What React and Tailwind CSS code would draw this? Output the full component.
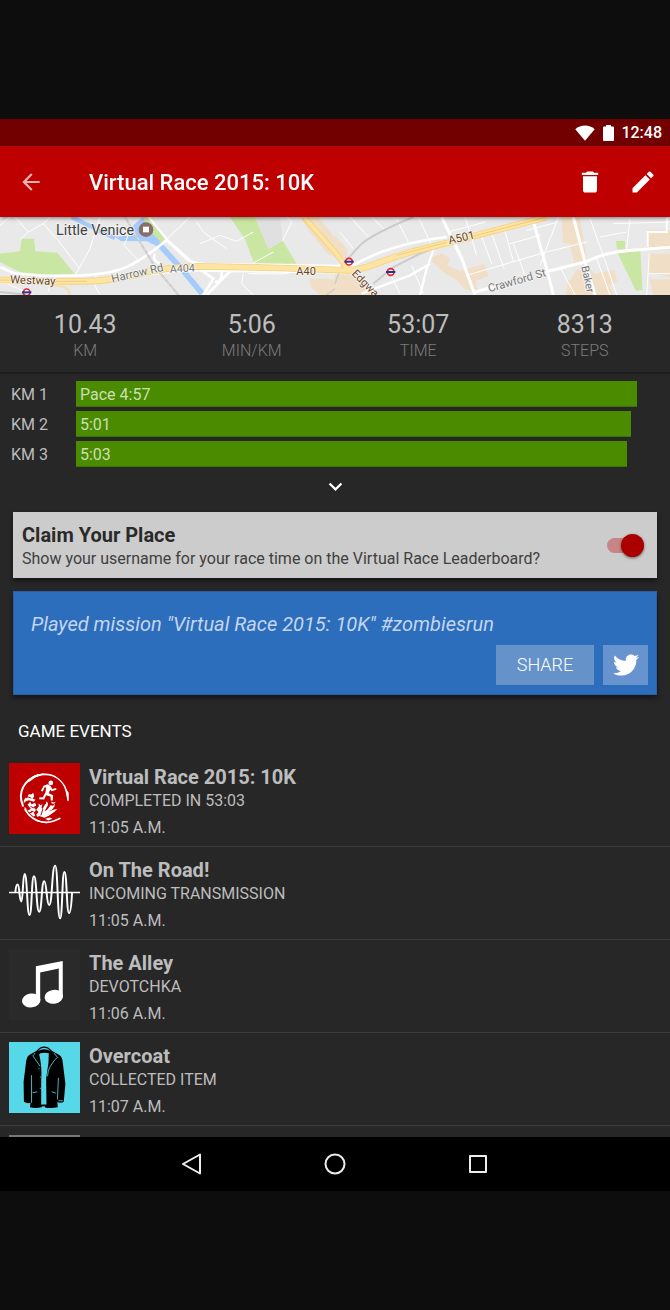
import React, { useState } from "react";
import { MdArrowBack, MdDelete, MdEdit, MdKeyboardArrowDown } from "react-icons/md";
import { FaTwitter } from "react-icons/fa";

const stats = [
  { value: "10.43", label: "KM" },
  { value: "5:06", label: "MIN/KM" },
  { value: "53:07", label: "TIME" },
  { value: "8313", label: "STEPS" },
];

const splits = [
  { km: "KM 1", text: "Pace 4:57", width: 96.6 },
  { km: "KM 2", text: "5:01", width: 95.6 },
  { km: "KM 3", text: "5:03", width: 94.8 },
];

function StatusBar() {
  return (
    <div className="flex h-[27px] shrink-0 items-center justify-end bg-[#720000] pr-2 text-white">
      <svg width="20" height="16" viewBox="0 0 20 16" fill="currentColor" aria-hidden="true">
        <path d="M10 15.8 0.3 4.2C3 1.8 6.3 0.6 10 0.6s7 1.2 9.7 3.6z" />
      </svg>
      <svg className="ml-2" width="11" height="16" viewBox="0 0 11 16" fill="currentColor" aria-hidden="true">
        <path d="M3 0h5v1.500h2q1 0 1 1V15q0 1-1 1H1q-1 0-1-1V2.500q0-1 1-1h2z" />
      </svg>
      <span className="ml-[7px] pt-px text-base font-medium">12:48</span>
    </div>
  );
}

function Toolbar() {
  return (
    <header className="relative z-10 flex h-[71px] shrink-0 items-center bg-[#be0000] px-[11px] text-white shadow-[0_1px_4px_rgba(0,0,0,0.5)]">
      <button type="button" aria-label="Back" className="flex size-10 items-center justify-center text-white/70">
        <MdArrowBack size={26} />
      </button>
      <h1 className="ml-[38px] flex-1 pt-0.5 text-[22px] font-medium">Virtual Race 2015: 10K</h1>
      <button type="button" aria-label="Delete" className="flex size-10 items-center justify-center">
        <MdDelete size={28} />
      </button>
      <button type="button" aria-label="Edit" className="-mr-1 ml-[13px] flex size-10 items-center justify-center">
        <MdEdit size={28} />
      </button>
    </header>
  );
}

function Station({ x, y }) {
  return (
    <g>
      <circle cx={x} cy={y} r="10" fill="#fff" stroke="#e32431" strokeWidth="5" />
      <path d={`M${x - 14} ${y}h28`} stroke="#27348b" strokeWidth="6" />
    </g>
  );
}

function RouteMap() {
  return (
    <svg
      className="block h-[78px] w-full bg-[#e9e9e9]"
      viewBox="0 15 2010 234"
      preserveAspectRatio="xMidYMid slice"
      role="img"
      aria-label="Route map"
      fontFamily="Roboto, sans-serif"
    >
      {/* parks */}
      <g fill="#c9e6a2">
        <path d="M0 125 60 118 65 80 102 80 106 118 172 122 226 188 70 185 0 150z" />
        <path d="M690 15H765L805 112 848 86 890 155 762 153 735 82z" />
        <path d="M440 15 498 82 482 96 445 58 428 15z" />
        <path d="M1848 87h27v25h-24zM1853 124 1921 117 1927 234 1908 236z" />
      </g>
      <path d="M765 15H840L848 86 805 112z" fill="#e0e0e0" />
      {/* built-up areas */}
      <g fill="#f0dfc6">
        <path d="M900 15H955L1005 78 1005 135 985 128 930 60z" />
        <path d="M930 200h75v50h-45l-28-26zM1005 70 1040 110 1048 150 1005 120zM1005 188h62l75 62H1005z" />
        <path d="M940 160h65v22h-50z" />
        <path d="M1287 140 1325 124 1350 140 1342 160 1380 178 1452 155 1466 192 1428 207 1432 240 1395 232 1365 200 1330 180z" />
        <path d="M1685 15h54l22 130-38 12-14-62-20-2zM1725 178l42-12 16 20 58-12 12 36-24 8 12 32-100 0 8-40-38-4z" />
        <path d="M1940 55h70v60h-70zM1945 125h65v70l-62-12zM1948 202h62v48h-50z" />
        <path d="M1705 205h44l8 44h-60z" />
      </g>
      {/* canal */}
      <g fill="none" stroke="#a5cbfb">
        <path d="M215 15 255 35 345 78" strokeWidth="13" />
        <path d="M482 102 540 165 606 244" strokeWidth="17" />
      </g>
      <path d="M428 15 398 42 400 70 345 74 362 87 440 88 474 104 488 96 448 55z" fill="#a5cbfb" />
      {/* side streets */}
      <g fill="none" stroke="#fff" strokeWidth="3">
        <path d="M0 40 30 15M45 15 85 60 130 35 150 15M300 15 270 110 238 168 170 80 130 35M238 168 226 188M290 185 282 215 300 249M85 60 62 82" />
        <path d="M395 45 372 100 420 150M570 15 500 82M600 95 660 70 710 88 760 60M590 30 610 60 680 110M848 86 875 30 860 15" />
        <path d="M730 185 725 215 760 249M745 185 840 186M840 186 930 175M760 153 820 120M20 215 100 249M150 218 145 240" />
        <path d="M1050 15 1105 75M1115 15 1155 55M1020 60 1060 110M1190 20 1225 90M1255 15 1300 110M1235 160 1270 245M1395 15 1430 130M1440 60 1475 155M1470 50 1512 170M1510 40 1540 148" />
        <path d="M1345 60 1455 30M1400 190 1640 120M1530 95 1620 70M1580 55 1675 30M1770 20 1820 160 1850 249M1890 20 1880 110M1640 120 1760 90M1675 15 1620 160M1800 75 1880 60M1840 35 2010 30M1680 165 1725 249M1790 140 1830 249M1540 95 1575 190" />
        <path d="M1945 185H2010M1948 125 1940 249M1175 195 1200 245" />
      </g>
      {/* secondary roads */}
      <g fill="none" stroke="#fff">
        <path d="M0 165 40 183 140 192 250 190Q340 185 390 160T500 84L570 145" strokeWidth="8" />
        <path d="M446 15 505 88 M465 125Q455 145 480 155" strokeWidth="7" />
        <path d="M500 84 560 140Q580 158 660 158T1005 162M590 165 640 200 610 249M710 175 690 178 620 249M665 158V190Q662 210 645 210" strokeWidth="8" />
        <path d="M0 212H250Q400 190 560 175L1040 182" strokeWidth="7" />
        <path d="M1325 15 1385 140 1425 249M1602 35 1640 170 1660 249M1720 15 1755 150 1785 249" strokeWidth="9" />
        <path d="M1425 240 1480 225M1635 180 1755 150Q1820 120 1880 116L2010 106" strokeWidth="9" />
        <path d="M1300 115 1280 170 1260 249M1085 245 1230 190 1290 155" strokeWidth="7" />
        <path d="M1943 105V60H2000V15" strokeWidth="6" />
        <path d="M1005 162 1060 160Q1110 130 1180 108T1340 75" strokeWidth="8" />
      </g>
      {/* railway lines */}
      <g fill="none" stroke="#cbcbcb">
        <path d="M375 15 420 90 465 165 535 249M0 240 90 249" strokeWidth="6" />
        <path d="M1025 160 1085 95Q1130 60 1240 15M1120 215 1180 165 1260 125 1340 95 1600 28" strokeWidth="6" />
        <path d="M1005 215 1025 160M1005 230 980 249" strokeWidth="4" />
      </g>
      <path d="M375 15 420 90 465 165 535 249" fill="none" stroke="#ececec" strokeWidth="2" strokeDasharray="9 9" />
      {/* main roads */}
      <g fill="none" strokeLinejoin="round">
        <g stroke="#f4d37f" strokeWidth="20">
          <path d="M0 204 160 208H260Q340 205 420 185T600 163L840 168 1040 175Q1080 175 1130 155T1240 118L1345 92 1460 62 1640 15" />
          <path d="M912 15 1005 120 1050 180" strokeWidth="17" />
        </g>
        <g stroke="#fee4a2" strokeWidth="15">
          <path d="M0 204 160 208H260Q340 205 420 185T600 163L840 168 1040 175Q1080 175 1130 155T1240 118L1345 92 1460 62 1640 15" />
          <path d="M912 15 1005 120 1050 180" strokeWidth="12" />
        </g>
        <path d="M0 204 160 208H260M1190 130 1340 91M1410 75 1640 15" stroke="#e8c16c" strokeWidth="2" />
        <path d="M160 220Q210 220 208 249" stroke="#f7dfb0" strokeWidth="7" />
      </g>
      <circle cx="438" cy="53" r="22" fill="#8a6d66" />
      <path d="M429 44h18v17h-18z" fill="#fff" />
      <Station x={80} y={241} />
      <Station x={1047} y={149} />
      <Station x={1172} y={180} />
      <g strokeLinejoin="round" stroke="#f4f4f4" strokeWidth="5" paintOrder="stroke">
        <text x="168" y="70" fontSize="43" fill="#404040">Little Venice</text>
        <g fill="#6e4618" fontSize="34">
          <text x="30" y="214" transform="rotate(2 30 214)">Westway</text>
          <text x="889" y="189" fontSize="33">A40</text>
          <text x="1348" y="97" transform="rotate(-13 1348 97)">A501</text>
          <text x="1054" y="186" transform="rotate(46 1054 186)" fontSize="33">Edgwa</text>
        </g>
        <g fill="#777" fontSize="34">
          <text x="337" y="212" transform="rotate(-13 337 212)">Harrow Rd</text>
          <text x="510" y="182" transform="rotate(-3 510 182)" fontSize="32">A404</text>
          <text x="1468" y="241" transform="rotate(-16 1468 241)">Crawford St</text>
          <text x="1744" y="164" transform="rotate(78 1744 164)" fontSize="32">Baker</text>
        </g>
      </g>
    </svg>
  );
}

function Stats() {
  return (
    <dl className="grid h-[79px] grid-cols-4 border-b-2 border-[#1d1d1d] px-0.5 pt-4 text-center">
      {stats.map((s) => (
        <div key={s.label} className="flex flex-col-reverse justify-end">
          <dt className="text-base leading-6 font-light text-[#7c7c7c]">{s.label}</dt>
          <dd className="text-[25px] leading-7 text-[#bdbdbd]">{s.value}</dd>
        </div>
      ))}
    </dl>
  );
}

function Splits() {
  return (
    <section aria-label="Splits" className="pt-[7px]">
      <ul className="flex flex-col gap-1 pr-[13px] pl-[11px]">
        {splits.map((s) => (
          <li key={s.km} className="flex h-[26px] items-center text-base text-[#bdbdbd]">
            <span className="w-[65px] shrink-0 pt-0.5">{s.km}</span>
            <div className="h-full flex-1">
              <div
                className="flex h-full items-center border-b border-[#3f7206] bg-[#4a8b00] pt-0.5 pl-1 text-[#cbdfb4]"
                style={{ width: `${s.width}%` }}
              >
                {s.text}
              </div>
            </div>
          </li>
        ))}
      </ul>
      <button type="button" aria-label="Show all splits" className="flex h-[45px] w-full items-center justify-center pb-1.5 text-white">
        <MdKeyboardArrowDown size={27} />
      </button>
    </section>
  );
}

function ClaimCard() {
  const [on, setOn] = useState(true);
  return (
    <section className="mx-[13px] flex h-[66px] items-center bg-[#cccccc] px-[9px] text-[#2a2a2a] shadow-[0_3px_5px_rgba(0,0,0,0.45)]">
      <label htmlFor="claim" className="flex-1 pt-1">
        <span className="block text-xl leading-6 font-bold">Claim Your Place</span>
        <span className="block text-base leading-6 text-[#404040]">
          Show your username for your race time on the Virtual Race Leaderboard?
        </span>
      </label>
      <input
        id="claim"
        type="checkbox"
        role="switch"
        checked={on}
        onChange={(e) => setOn(e.target.checked)}
        className="mr-1 flex h-[15px] w-[37px] shrink-0 appearance-none items-center rounded-full bg-[#888]/50 before:size-[23px] before:shrink-0 before:rounded-full before:bg-[#eee] before:shadow-[0_1px_3px_rgba(0,0,0,0.5)] checked:justify-end checked:bg-[#be0000]/35 checked:before:bg-[#ac0000]"
      />
    </section>
  );
}

function ShareCard() {
  return (
    <section className="mx-[13px] mt-[13px] h-[104px] border border-[#2860a5] bg-[#2c6dbc] px-2 pt-[18px] shadow-[0_3px_5px_rgba(0,0,0,0.45)]">
      <p className="pl-[9px] text-xl leading-7 text-[#c3d6ee] italic">
        Played mission "Virtual Race 2015: 10K" #zombiesrun
      </p>
      <div className="mt-[7px] flex justify-end gap-[9px]">
        <button type="button" className="h-10 w-[98px] bg-[#6592c9] text-lg font-light text-white">
          SHARE
        </button>
        <button type="button" aria-label="Share on Twitter" className="flex h-10 w-[45px] items-center justify-center bg-[#6794cf] text-white">
          <FaTwitter size={26} />
        </button>
      </div>
    </section>
  );
}

function RunnerArt() {
  return (
    <svg className="size-full bg-[#be0000]" viewBox="12 10 214 214" fill="#fff" aria-hidden="true">
      <g fill="none" stroke="#fff" strokeLinecap="round">
        <path d="M54 139Q41 108 55 82T101 46" strokeWidth="6" />
        <path d="M82 55Q98 44 120 44T158 56Q178 70 184 93" strokeWidth="4" />
        <path d="M178 76Q188 92 190 124" strokeWidth="3" />
        <path d="M184 92 190 100V123L187 108Z" strokeWidth="4" />
        <path d="M61 151Q75 175 99 184T147 185L165 177" strokeWidth="5" />
        <path d="M70 166 95 184 124 190" strokeWidth="3" />
      </g>
      <path d="M80 53 93 46 112 42 145 47 112 47 92 53 72 68z" />
      <circle cx="138" cy="70" r="7" />
      <path d="M117 78 129 74 138 80 142 88 154 85 155 91 141 95 136 91 132 101 145 107 144 123 138 123 137 111 124 107 118 120 103 119 103 114 114 113 122 98 124 83 119 84 114 96 108 94z" />
      <path d="M57 123 61 115 67 116 71 104 79 105 85 100 88 111 83 117 92 121 87 127 72 122 63 125 56 131z" />
      <path d="M68 136 76 127 80 134 91 130 94 139 86 142 93 151 90 158 80 154 75 159 67 154 78 149z" />
      <path d="M94 151 102 140 101 132 108 138 113 132 110 143 112 150 120 136 124 132 123 124 127 131 130 125 129 137 119 156 128 150 137 137 145 139 150 132 149 141 142 150 130 157 146 151 158 149 149 157 132 169 119 175 103 170 98 173 94 166 101 158z" />
      <path d="M75 162 86 157 91 169 86 171z" />
      <path d="M139 126l7 3 7-2-5 6-7-1zM59 142l5 5 1 9-6-5zM121 178l14-4 8 4-13 5z" />
      <g stroke="#be0000" strokeWidth="3" fill="none">
        <path d="M69 112 79 116M77 141 88 146M114 149 108 168" />
      </g>
    </svg>
  );
}

function WaveArt() {
  const points = [[53, 390], [64, 441], [74, 358], [89, 482], [102, 365], [118, 472], [133, 380], [148, 452], [166, 333], [181, 492], [194, 352], [208, 476]];
  let d = "M46 414Q48 390 53 390";
  for (let i = 1; i < points.length; i += 1) {
    const [px, py] = points[i - 1];
    const [x, y] = points[i];
    const c = (x - px) * 0.55;
    d += `C${px + c} ${py} ${x - c} ${y} ${x} ${y}`;
  }
  d += "Q214 476 217 414";
  return (
    <svg className="size-full" viewBox="27 304 214 214" fill="none" stroke="#fff" aria-hidden="true">
      <path d={d} strokeWidth="6" />
      <path d="M27 414H241" strokeWidth="4" />
    </svg>
  );
}

function MusicArt() {
  return (
    <svg className="size-full bg-[#2a2a2a]" viewBox="27 45 214 214" fill="#fff" aria-hidden="true">
      <path d="M108 97 189 81V190H177V104L121 116V201H108z" />
      <ellipse cx="94" cy="200" rx="28" ry="21" transform="rotate(-8 94 200)" />
      <ellipse cx="162" cy="189" rx="28" ry="21" transform="rotate(-8 162 189)" />
    </svg>
  );
}

function CoatArt() {
  return (
    <svg className="size-full bg-[#57d8e8]" viewBox="12 10 214 214" aria-hidden="true">
      <path d="M94 37Q118 10 142 37L165 50Q173 56 174 72L182 136 177 190Q168 195 158 191L159 207Q140 211 122 208L120 202H112L110 207Q92 211 75 207L77 193Q67 197 57 190L56 130 64 66Q65 54 73 49z" />
      <path d="M105 45Q118 40 132 44L131 72 124 120 125 199H109V130Q112 82 103 48z" fill="#57d8e8" />
      <path d="M98 37Q118 18 138 37Q118 27 98 37z" fill="#57d8e8" />
      <g fill="none" stroke="#57d8e8" strokeWidth="2.500">
        <path d="M91 43 84 52 106 83M147 43 158 56Q148 64 136 84 129 96 128 113" />
        <path d="M80 110V193M161 118 158 183M83 163 97 160M141 160 153 164M161 187 174 187" />
      </g>
      <path d="M101 89h3v3h-3zM106 114h3v3h-3zM105 148h3v3h-3z" fill="#57d8e8" />
      <path d="M109 199h18v5h-18z" />
    </svg>
  );
}

const events = [
  { title: "Virtual Race 2015: 10K", detail: "COMPLETED IN 53:03", time: "11:05 A.M.", Art: RunnerArt },
  { title: "On The Road!", detail: "INCOMING TRANSMISSION", time: "11:05 A.M.", Art: WaveArt },
  { title: "The Alley", detail: "DEVOTCHKA", time: "11:06 A.M.", Art: MusicArt },
  { title: "Overcoat", detail: "COLLECTED ITEM", time: "11:07 A.M.", Art: CoatArt },
];

function Events() {
  return (
    <section>
      <h2 className="px-[18px] pt-6 pb-[11px] text-[17px] leading-6 text-white">GAME EVENTS</h2>
      <ul>
        {events.map(({ title, detail, time, Art }) => (
          <li key={title} className="flex h-[93px] gap-[9px] border-b border-[#3b3b3b] px-[9px] pt-[9px] text-[#bdbdbd]">
            <div className="size-[71px] shrink-0">
              <Art />
            </div>
            <div className="text-base">
              <h3 className="text-xl leading-7 font-bold">{title}</h3>
              <p className="leading-5">{detail}</p>
              <p className="mt-1 leading-[26px]">{time}</p>
            </div>
          </li>
        ))}
        <li className="h-[93px] px-[9px] pt-[9px]" aria-hidden="true">
          <div className="size-[71px] bg-[#777]" />
        </li>
      </ul>
    </section>
  );
}

function NavBar() {
  return (
    <nav className="flex h-[54px] shrink-0 items-center justify-center bg-black text-[#eee]">
      <button type="button" aria-label="Back" className="flex h-full w-[143px] items-center justify-center">
        <svg width="22" height="22" viewBox="0 0 22 22" fill="none" stroke="currentColor" strokeWidth="2" strokeLinejoin="round" aria-hidden="true">
          <path d="M19 1.500v19L2 11z" />
        </svg>
      </button>
      <button type="button" aria-label="Home" className="flex h-full w-[143px] items-center justify-center">
        <svg width="22" height="22" viewBox="0 0 22 22" fill="none" stroke="currentColor" strokeWidth="2" aria-hidden="true">
          <circle cx="11" cy="11" r="9.500" />
        </svg>
      </button>
      <button type="button" aria-label="Overview" className="flex h-full w-[143px] items-center justify-center">
        <svg width="22" height="22" viewBox="0 0 22 22" fill="none" stroke="currentColor" strokeWidth="2" strokeLinejoin="round" aria-hidden="true">
          <path d="M3 3h16v16H3z" />
        </svg>
      </button>
    </nav>
  );
}

export default function App() {
  return (
    <div className="flex h-screen flex-col bg-[#0d0d0d] py-[119px] font-[Roboto,sans-serif]">
      <StatusBar />
      <Toolbar />
      <main className="min-h-0 flex-1 overflow-y-auto bg-[#272727] [scrollbar-width:none]">
        <RouteMap />
        <Stats />
        <Splits />
        <ClaimCard />
        <ShareCard />
        <Events />
      </main>
      <NavBar />
    </div>
  );
}
